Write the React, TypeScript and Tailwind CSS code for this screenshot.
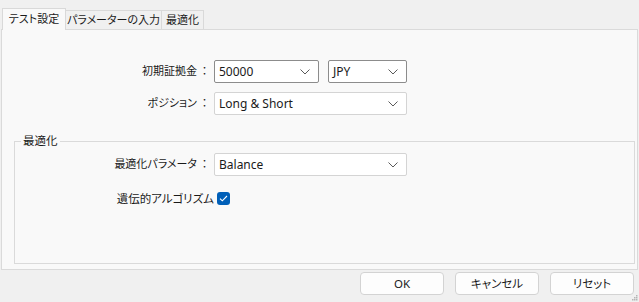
function Chevron() {
  return (
    <svg width="10" height="6" viewBox="0 0 10 6" className="shrink-0">
      <path d="M0.5 0.5 L5 5 L9.5 0.5" fill="none" stroke="#5a5a5a" strokeWidth="1" />
    </svg>
  );
}

function Select({ value, w, dark }: { value: string; w: string; dark?: boolean }) {
  return (
    <div
      className={`${w} h-[23px] flex items-center justify-between pl-[4px] pr-[8px] rounded-[2px] bg-white border ${
        dark ? 'border-[#8c8c8c]' : 'border-[#d4d4d4]'
      } text-[12px] text-[#1a1a1a]`}
    >
      <span>{value}</span>
      <Chevron />
    </div>
  );
}

function Label({ text, w }: { text: string; w: string }) {
  return (
    <div className={`${w} text-right text-[11px] pr-[4px] whitespace-nowrap`}>
      {text}
      <span className="[font-feature-settings:normal] ml-[2px]">：</span>
    </div>
  );
}

function Button({ label }: { label: string }) {
  return (
    <div className="w-[84px] h-[23px] flex items-center justify-center rounded-[4px] bg-[#fdfdfd] border border-[#d3d3d3] text-[11.5px] text-[#1a1a1a]">
      {label}
    </div>
  );
}

export default function App() {
  return (
    <div className="w-[639px] h-[302px] bg-[#f0f0f0] relative overflow-hidden text-[#1a1a1a] font-['Noto_Sans','Noto_Sans_CJK_JP',sans-serif] [font-feature-settings:'palt']">
      {/* tabs */}
      <div className="flex items-end h-[29px] pl-[2px] whitespace-nowrap text-[11px]">
        <div className="w-[64px] h-[22px] mb-[-1px] bg-[#f9f9f9] border border-b-0 border-[#d9d9d9] flex items-center justify-center relative z-10">
          テスト設定
        </div>
        <div className="h-[19px] w-[96px] border border-l-0 border-b-0 border-[#d9d9d9] flex items-center justify-center">
          パラメーターの入力
        </div>
        <div className="h-[19px] w-[42px] border border-l-0 border-b-0 border-[#d9d9d9] flex items-center justify-center">
          最適化
        </div>
      </div>

      {/* panel */}
      <div className="ml-[1px] w-[637px] h-[241px] bg-[#f9f9f9] border border-[#dadada] flex flex-col">
        <div className="flex flex-col gap-[9px] pt-[30px]">
          <div className="flex items-center">
            <Label text="初期証拠金" w="w-[212px]" />
            <Select value="50000" w="w-[105px]" dark />
            <div className="w-[9px]" />
            <Select value="JPY" w="w-[79px]" dark />
          </div>
          <div className="flex items-center">
            <Label text="ポジション" w="w-[212px]" />
            <Select value="Long & Short" w="w-[193px]" />
          </div>
        </div>

        {/* group */}
        <div className="relative ml-[12px] mt-[26px] w-[621px] h-[123px] border border-[#dadada]">
          <div className="absolute left-[6px] top-[-9px] px-[2px] bg-[#f9f9f9] text-[11.5px] leading-[16px]">最適化</div>
          <div className="flex flex-col pt-[11px]">
            <div className="flex items-center">
              <Label text="最適化パラメータ" w="w-[199px]" />
              <Select value="Balance" w="w-[193px]" />
            </div>
            <div className="flex items-center mt-[14px]">
              <div className="w-[202px] text-right text-[11.5px] pr-[3px] whitespace-nowrap">遺伝的アルゴリズム</div>
              <div className="w-[13px] h-[13px] rounded-[3px] bg-[#005fb8] flex items-center justify-center">
                <svg width="9" height="7" viewBox="0 0 9 7">
                  <path d="M1 3.6 L3.3 5.8 L8 1" fill="none" stroke="#ffffff" strokeWidth="1.1" />
                </svg>
              </div>
            </div>
          </div>
        </div>
      </div>

      {/* buttons */}
      <div className="flex justify-end gap-[11px] pr-[5px] pt-[2px]">
        <Button label="OK" />
        <Button label="キャンセル" />
        <Button label="リセット" />
      </div>

      {/* size grip */}
      <svg className="absolute right-[1px] bottom-[1px]" width="7" height="7" viewBox="0 0 7 7">
        <rect x="5" y="1" width="1.5" height="1.5" fill="#b5b5b5" />
        <rect x="3" y="3" width="1.5" height="1.5" fill="#b5b5b5" />
        <rect x="5" y="3" width="1.5" height="1.5" fill="#b5b5b5" />
        <rect x="1" y="5" width="1.5" height="1.5" fill="#b5b5b5" />
        <rect x="3" y="5" width="1.5" height="1.5" fill="#b5b5b5" />
        <rect x="5" y="5" width="1.5" height="1.5" fill="#b5b5b5" />
      </svg>
    </div>
  );
}
